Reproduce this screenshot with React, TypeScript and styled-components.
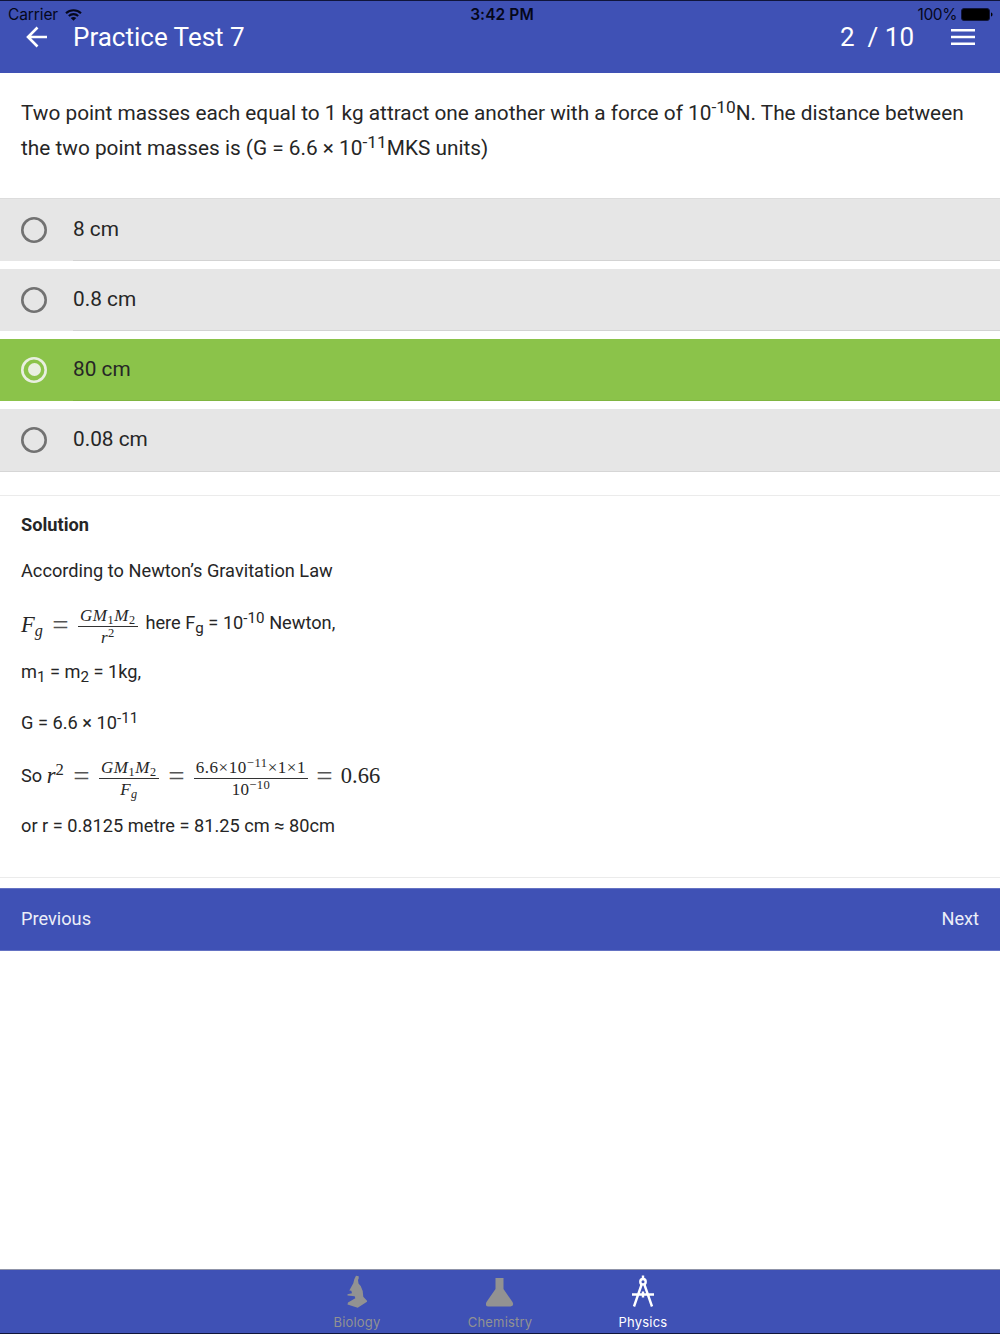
import React from "react";
import styled, { createGlobalStyle } from "styled-components";

const Global = createGlobalStyle`
  * { box-sizing: border-box; }
  body { margin: 0; background: #fff; }
`;

const Screen = styled.div`
  width: 1000px;
  height: 1334px;
  display: flex;
  flex-direction: column;
  overflow: hidden;
  background: #fff;
  color: #262626;
  font-family: Roboto, sans-serif;
`;

const Header = styled.header`
  height: 73px;
  flex: none;
  background: #3f51b5;
  border-top: 1px solid #10153a;
  display: flex;
  flex-direction: column;
`;

const StatusBar = styled.div`
  height: 24px;
  padding: 3px 7px 0 8px;
  display: grid;
  grid-template-columns: 1fr auto 1fr;
  align-items: center;
  color: #05071a;
  font: 15.5px/21px Inter, sans-serif;
`;

const StatusGroup = styled.div<{ $end?: boolean }>`
  display: flex;
  align-items: center;
  gap: ${(p) => (p.$end ? 4 : 7)}px;
  justify-content: ${(p) => (p.$end ? "flex-end" : "flex-start")};
`;

const StatusText = styled.span<{ $spacing?: number }>`
  letter-spacing: ${(p) => p.$spacing ?? 0}px;
`;

const Clock = styled.span`
  font-weight: 600;
  padding-left: 3px;
  letter-spacing: 0.1px;
`;

const TitleBar = styled.div`
  height: 24px;
  padding: 0 25px 0 26px;
  display: flex;
  align-items: center;
  color: #fff;
`;

const Title = styled.h1`
  margin: 0 0 0 25px;
  flex: 1;
  font-size: 26px;
  line-height: 24px;
  font-weight: 400;
`;

const Counter = styled.span`
  font-size: 26px;
  line-height: 24px;
  white-space: pre;
  margin-right: 37px;
`;

const Question = styled.p`
  margin: 0;
  height: 125px;
  padding: 23px 21px 0;
  font-size: 20.8px;
  line-height: 35px;
  white-space: nowrap;
`;

const Sup = styled.sup`
  font-size: 0.833em;
  line-height: 0;
  vertical-align: 0.4em;
`;

const Sub = styled.sub`
  font-size: 0.833em;
  line-height: 0;
  vertical-align: -0.28em;
`;

const Options = styled.div`
  display: flex;
  flex-direction: column;
  gap: 7.7px;
  border-top: 1px solid #dcdcdc;
  border-bottom: 1px solid #d6d6d6;
`;

const Option = styled.label<{ $active?: boolean }>`
  height: 62.2px;
  padding-left: 21px;
  display: flex;
  align-items: stretch;
  background: ${(p) => (p.$active ? "#8bc34a" : "#e6e6e6")};
`;

const Radio = styled.span<{ $active?: boolean }>`
  width: 26px;
  height: 26px;
  margin: auto 26px auto 0;
  display: grid;
  place-items: center;
  box-shadow: inset 0 0 0 2.6px ${(p) => (p.$active ? "#e9efe1" : "#727272")};
  border-radius: 50%;
`;

const Dot = styled.span`
  width: 13px;
  height: 13px;
  border-radius: 50%;
  background: #e9efe1;
`;

const OptionText = styled.span<{ $active?: boolean; $last?: boolean }>`
  flex: 1;
  font-size: 20.8px;
  line-height: 61.5px;
  border-bottom: ${(p) => (p.$last ? 0 : 1)}px solid ${(p) => (p.$active ? "#7fb540" : "#d3d3d3")};
`;

const Solution = styled.section`
  height: 383px;
  margin-top: 23px;
  padding: 7px 21px 0;
  border-top: 1px solid #ebebeb;
  border-bottom: 1px solid #ebebeb;
`;

const Line = styled.div<{ $h: number; $bold?: boolean }>`
  height: ${(p) => p.$h}px;
  display: flex;
  align-items: center;
  font-size: 18.2px;
  line-height: 24px;
  letter-spacing: 0.01px;
  font-weight: ${(p) => (p.$bold ? 700 : 400)};
  white-space: pre;
`;

const AfterMath = styled.span`
  padding-left: 7.5px;
`;

const MathBox = styled.span<{ $shift: number }>`
  display: inline-flex;
  align-items: center;
  padding-top: ${(p) => p.$shift}px;
  font-family: "Liberation Serif", serif;
  font-size: 22.5px;
`;

const Frac = styled.span<{ $w: number; $drop: number }>`
  width: ${(p) => p.$w}px;
  margin-top: ${(p) => p.$drop}px;
  display: inline-flex;
  flex-direction: column;
  align-items: center;
  font-size: 17px;
  letter-spacing: 0.35px;
`;

const Num = styled.span<{ $spacing?: number }>`
  width: 100%;
  height: 21px;
  line-height: 20px;
  text-align: center;
  letter-spacing: ${(p) => p.$spacing ?? 0.6}px;
  border-bottom: 1px solid #333;
`;

const Den = styled.span`
  height: 21px;
  line-height: 22px;
`;

const MSup = styled.sup`
  font-size: 0.74em;
  line-height: 0;
  vertical-align: 0.46em;
  font-style: normal;
`;

const MSub = styled.sub<{ $it?: boolean }>`
  font-size: 0.72em;
  line-height: 0;
  vertical-align: -0.22em;
  font-style: ${(p) => (p.$it ? "italic" : "normal")};
`;

const Eq = styled.span<{ $w?: number }>`
  width: ${(p) => p.$w ?? 35}px;
  text-align: center;
  font-size: 29px;
  color: #555;
`;

const Pager = styled.nav`
  height: 63px;
  margin-top: 10px;
  padding: 0 21px 2px;
  display: flex;
  align-items: center;
  justify-content: space-between;
  background: #3f51b5;
  border-top: 1px solid #6472c3;
  border-bottom: 1px solid #6472c3;
  color: #eceef8;
  font-size: 18.2px;
`;

const TabBar = styled.footer`
  height: 65px;
  margin-top: auto;
  padding-top: 4px;
  display: flex;
  justify-content: center;
  background: #3f51b5;
  border-top: 1px solid #8f93a8;
  border-bottom: 1px solid #10153a;
`;

const Tab = styled.div<{ $active?: boolean }>`
  width: 143px;
  display: flex;
  flex-direction: column;
  align-items: center;
  gap: 5px;
  color: ${(p) => (p.$active ? "#fff" : "#929292")};
  font: 13px/16px Inter, sans-serif;
  letter-spacing: 0.2px;
`;

const GMM = () => (
  <i>
    GM<MSub>1</MSub>M<MSub>2</MSub>
  </i>
);

const answers = ["8 cm", "0.8 cm", "80 cm", "0.08 cm"];

export default function App() {
  return (
    <Screen>
      <Global />
      <Header>
        <StatusBar>
          <StatusGroup>
            <StatusText $spacing={-0.1}>Carrier</StatusText>
            <svg width="17" height="12" viewBox="0 0 17 12" fill="none" stroke="#05071a" strokeWidth="2.1">
              <path d="M1 4.2C5.2.2 11.8.2 16 4.2M3.8 7c2.7-2.5 6.700-2.500 9.400 0" />
              <path d="M8.500 11.800L5.700 9c1.700-1.400 3.900-1.400 5.600 0z" fill="#05071a" stroke="none" />
            </svg>
          </StatusGroup>
          <Clock>3:42 PM</Clock>
          <StatusGroup $end>
            <StatusText $spacing={-0.4}>100%</StatusText>
            <svg width="32" height="13" viewBox="0 0 32 13">
              <rect x=".5" y=".5" width="28" height="12" rx="2.500" fill="#000" stroke="#10153a" />
              <path d="M30 4.500c2 .5 2 3.500 0 4z" fill="#000" />
            </svg>
          </StatusGroup>
        </StatusBar>
        <TitleBar>
          <svg width="22" height="22" viewBox="0 0 22 22" fill="none" stroke="#fff" strokeWidth="2.600">
            <path d="M21 11H2.500M11.500 1.500L2 11l9.500 9.500" />
          </svg>
          <Title>Practice Test 7</Title>
          <Counter>2  / 10</Counter>
          <svg width="24" height="16" viewBox="0 0 24 16" fill="#fff">
            <path d="M0 0h24v2.600H0zM0 6.700h24v2.600H0zM0 13.400h24v2.600H0z" />
          </svg>
        </TitleBar>
      </Header>

      <Question>
        Two point masses each equal to 1 kg attract one another with a force of 10<Sup>-10</Sup>N. The distance between
        <br />
        the two point masses is (G = 6.6 × 10<Sup>-11</Sup>MKS units)
      </Question>

      <Options>
        {answers.map((a, i) => {
          const active = a === "80 cm";
          return (
            <Option key={a} $active={active}>
              <Radio $active={active}>{active && <Dot />}</Radio>
              <OptionText $active={active} $last={i === answers.length - 1}>{a}</OptionText>
            </Option>
          );
        })}
      </Options>

      <Solution>
        <Line $h={45} $bold>Solution</Line>
        <Line $h={46}>According to Newton’s Gravitation Law</Line>
        <Line $h={59}>
          <MathBox $shift={3}>
            <i>F<MSub $it>g</MSub></i>
            <Eq>=</Eq>
            <Frac $w={60} $drop={4}>
              <Num><GMM /></Num>
              <Den><i>r</i><MSup>2</MSup></Den>
            </Frac>
          </MathBox>
          <AfterMath>here F<Sub>g</Sub> = 10<Sup>-10</Sup> Newton,</AfterMath>
        </Line>
        <Line $h={38}><span>m<Sub>1</Sub> = m<Sub>2</Sub> = 1kg,</span></Line>
        <Line $h={64}><span>G = 6.6 × 10<Sup>-11</Sup></span></Line>
        <Line $h={42}>
          <span>So </span>
          <MathBox $shift={1}>
            <span><i>r</i><MSup>2</MSup></span>
            <Eq>=</Eq>
            <Frac $w={60} $drop={5}>
              <Num><GMM /></Num>
              <Den><i>F<MSub $it>g</MSub></i></Den>
            </Frac>
            <Eq>=</Eq>
            <Frac $w={114} $drop={5}>
              <Num $spacing={0.55}>6.6×10<MSup>−11</MSup>×1×1</Num>
              <Den>10<MSup>−10</MSup></Den>
            </Frac>
            <Eq $w={33}>=</Eq>
            <span>0.66</span>
          </MathBox>
        </Line>
        <Line $h={59}>or r = 0.8125 metre = 81.25 cm ≈ 80cm</Line>
      </Solution>

      <Pager>
        <span>Previous</span>
        <span>Next</span>
      </Pager>

      <TabBar>
        <Tab>
          <svg width="22" height="35" viewBox="0 0 22 35" fill="currentColor">
            <path d="M10 1.700l2.700.5v2.300L12 6l.5 3.500 2.200 2.500 2 5 .6 5.700 3.700 4.100v1l-9.300 5.900L1.500 30.500l.5-2 7.300-4.200-.6-2L1.500 21.500v-1.200l4.500-1-.7-2.600-2-.2 4-7.200 1-4z" />
          </svg>
          Biology
        </Tab>
        <Tab>
          <svg width="28" height="35" viewBox="0.500 0 28 35" fill="currentColor">
            <path d="M10 4h8v11l9 13q2 4-2 4.500H3q-4-.5-2-4.500l9-13z" />
          </svg>
          Chemistry
        </Tab>
        <Tab $active>
          <svg width="24" height="35" viewBox="0 0 24 35" fill="none" stroke="currentColor" strokeWidth="2.400">
            <path d="M12 1.500v4M10.800 10L3 32.500M13.200 10L21 32.500M1 20.500h22M12 17.500v6" />
            <circle cx="12" cy="7.700" r="2.700" />
          </svg>
          Physics
        </Tab>
      </TabBar>
    </Screen>
  );
}
